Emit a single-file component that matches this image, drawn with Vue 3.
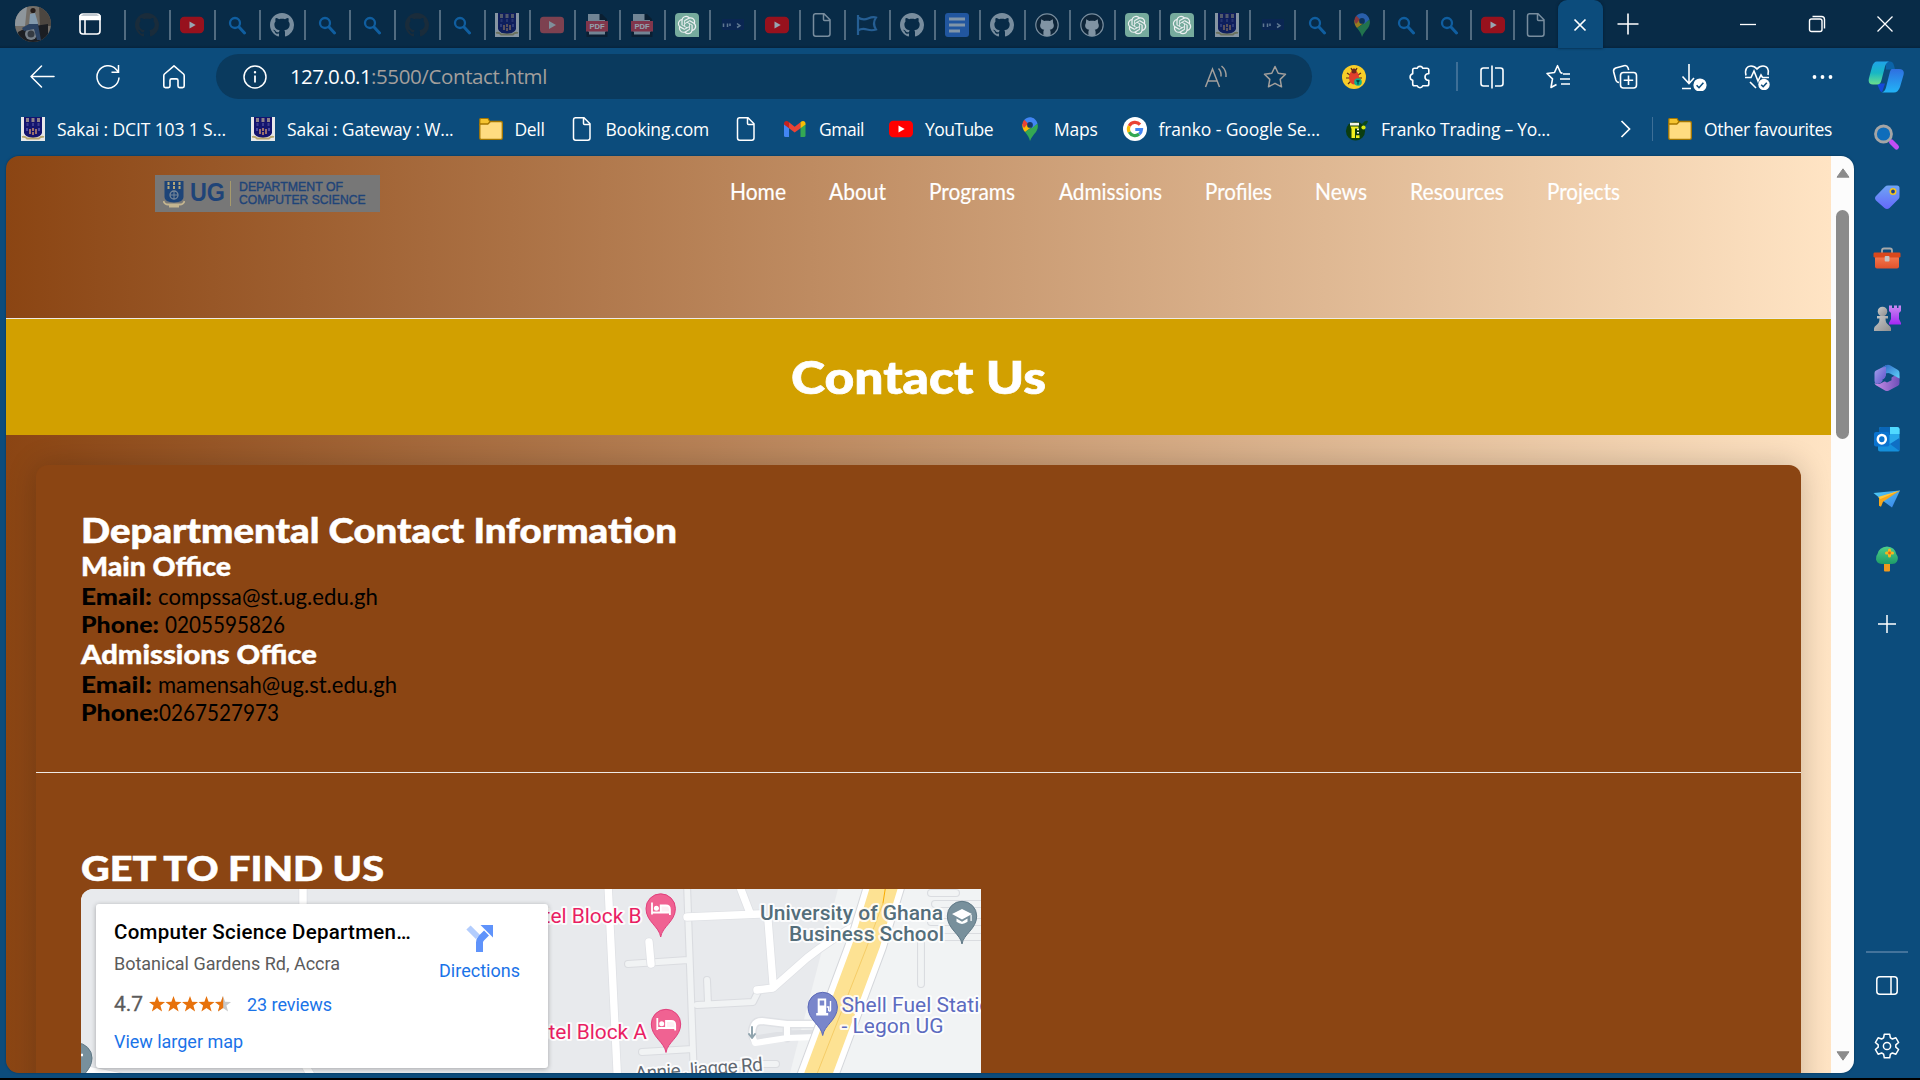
<script setup>
const tabs = [
  ['github', 'ghost'], ['youtube', 'dim'], ['search', 'dim'], ['github', 'mute'], ['search', 'dim'],
  ['search', 'dim'], ['github', 'ghost'], ['search', 'dim'], ['crest', 'mid'], ['youtube-pale', 'mid'],
  ['pdf', 'mid'], ['pdf', 'mid'], ['openai', 'high'], ['ims', 'dim'], ['youtube', 'dim'],
  ['doc', 'mute'], ['flag', 'mid'], ['github', 'mute'], ['gdocs', 'mid'], ['github', 'mute'],
  ['github-ring', 'mute'], ['github-ring', 'mute'], ['openai', 'high'], ['openai', 'high'],
  ['crest', 'mid'], ['ims', 'dim'], ['search', 'dim'],
]
const lateTabs = [['maps', 'dim'], ['search', 'dim'], ['search', 'dim'], ['youtube', 'dim'], ['doc', 'mute']]

const bookmarks = [
  { icon: 'crest', text: 'Sakai : DCIT 103 1 S...', w: 169 },
  { icon: 'crest', text: 'Sakai : Gateway : W...', w: 166.5 },
  { icon: 'folder', text: 'Dell', w: 30 },
  { icon: 'doc', text: 'Booking.com', w: 103.5 },
  { icon: 'doc' },
  { icon: 'gmail', text: 'Gmail', w: 45 },
  { icon: 'youtube', text: 'YouTube', w: 68 },
  { icon: 'maps', text: 'Maps', w: 43.5 },
  { icon: 'google', text: 'franko - Google Se...', w: 161.5 },
  { icon: 'franko', text: 'Franko Trading – Yo...', w: 169 },
]

const nav = [
  { text: 'Home', w: 56 }, { text: 'About', w: 57 }, { text: 'Programs', w: 86 },
  { text: 'Admissions', w: 103 }, { text: 'Profiles', w: 67 }, { text: 'News', w: 52 },
  { text: 'Resources', w: 94 }, { text: 'Projects', w: 73 },
]

const sideApps = ['magnifier', 'tag', 'toolbox', 'chess', 'm365', 'outlook', 'plane', 'tree']

// Tracks a label out (or in) so that it fills the given width.
const vFit = {
  mounted(el, { value }) {
    const natural = el.getBoundingClientRect().width
    el.style.letterSpacing = (value - natural) / el.textContent.length + 'px'
  },
}

// Widens or condenses the letterforms themselves to the given width.
const vStretch = {
  mounted(el, { value }) {
    const natural = el.getBoundingClientRect().width
    el.style.width = value + 'px'
    el.style.transform = `scaleX(${value / natural})`
  },
}
</script>

<template>
  <svg class="sprite" aria-hidden="true">
    <defs>
      <linearGradient id="cpA" x1="0" y1="0" x2="0" y2="1"><stop offset="0" stop-color="#1fa2e8" /><stop offset=".5" stop-color="#18b7c4" /><stop offset="1" stop-color="#6be08c" /></linearGradient>
      <linearGradient id="cpB" x1="0" y1="0" x2="0" y2="1"><stop offset="0" stop-color="#2f6fe0" /><stop offset="1" stop-color="#22b4f7" /></linearGradient>
      <linearGradient id="tagG" x1="0" y1="0" x2="0" y2="1"><stop offset="0" stop-color="#6fa4f4" /><stop offset="1" stop-color="#6468fb" /></linearGradient>
      <linearGradient id="boxG" x1="0" y1="0" x2="0" y2="1"><stop offset="0" stop-color="#f47a50" /><stop offset="1" stop-color="#e0522c" /></linearGradient>
      <linearGradient id="greyG" x1="0" y1="0" x2="1" y2="1"><stop offset="0" stop-color="#c9c9c9" /><stop offset="1" stop-color="#8f8f8f" /></linearGradient>
      <linearGradient id="rookG" x1="0" y1="0" x2="0" y2="1"><stop offset="0" stop-color="#c98bf0" /><stop offset="1" stop-color="#a426f5" /></linearGradient>
      <linearGradient id="mA" x1="0" y1="0" x2="1" y2="1"><stop offset="0" stop-color="#a7a4ee" /><stop offset="1" stop-color="#5b50c8" /></linearGradient>
      <linearGradient id="mB" x1="0" y1="0" x2="1" y2="1"><stop offset="0" stop-color="#2c62c4" /><stop offset="1" stop-color="#5fd4fa" /></linearGradient>
      <linearGradient id="mC" x1="0" y1="0" x2="1" y2="0"><stop offset="0" stop-color="#c98fe8" /><stop offset="1" stop-color="#6f4fb8" /></linearGradient>
      <linearGradient id="plG" x1="0" y1="0" x2="1" y2="1"><stop offset="0" stop-color="#4fd0f6" /><stop offset="1" stop-color="#3b7fe8" /></linearGradient>
      <linearGradient id="trG" x1="0" y1="0" x2="0" y2="1"><stop offset="0" stop-color="#4fd08a" /><stop offset="1" stop-color="#1e9c68" /></linearGradient>
    </defs>
    <symbol id="github" viewBox="0 0 16 16"><path fill="currentColor" d="M8 0C3.58 0 0 3.58 0 8c0 3.54 2.29 6.53 5.47 7.59.4.07.55-.17.55-.38 0-.19-.01-.82-.01-1.49-2.01.37-2.53-.49-2.69-.94-.09-.23-.48-.94-.82-1.13-.28-.15-.68-.52-.01-.53.63-.01 1.08.58 1.23.82.72 1.21 1.87.87 2.33.66.07-.52.28-.87.51-1.07-1.78-.2-3.64-.89-3.64-3.95 0-.87.31-1.59.82-2.15-.08-.2-.36-1.02.08-2.12 0 0 .67-.21 2.2.82.64-.18 1.32-.27 2-.27s1.36.09 2 .27c1.53-1.04 2.2-.82 2.2-.82.44 1.1.16 1.92.08 2.12.51.56.82 1.27.82 2.15 0 3.07-1.87 3.75-3.65 3.95.29.25.54.73.54 1.48 0 1.07-.01 1.93-.01 2.2 0 .21.15.46.55.38A8.01 8.01 0 0 0 16 8c0-4.42-3.58-8-8-8z" /></symbol>
    <symbol id="github-ring" viewBox="0 0 24 24"><circle cx="12" cy="12" r="11.2" fill="#14212e" stroke="#dfe7ee" stroke-width="1.2" /><path fill="#eef3f7" d="M6.2 6.2l3 1.8c1.8-.5 3.8-.5 5.6 0l3-1.8.3 3.8c1.8 3.2.2 6.5-3.4 6.7.8.8.9 1.6.9 2.6v3.2c-2.2.9-5 .9-7.2 0v-3.2c0-1 .1-1.8.9-2.6-3.6-.2-5.2-3.5-3.4-6.7z" /></symbol>
    <symbol id="youtube" viewBox="0 0 24 24"><rect y="3.7" width="24" height="16.6" rx="4.2" fill="#f00" /><path d="M9.5 8.4v7.2l6.2-3.6z" fill="#fff" /></symbol>
    <symbol id="youtube-pale" viewBox="0 0 24 24"><rect y="3.7" width="24" height="16.6" rx="3.5" fill="#d95357" /><path d="M9 8v8l7-4z" fill="#ddd" /></symbol>
    <symbol id="search" viewBox="0 0 24 24"><circle cx="10" cy="10" r="5" fill="none" stroke="#1684e0" stroke-width="2.3" /><path d="M14 14l5.5 6" stroke="#1684e0" stroke-width="3" stroke-linecap="round" /></symbol>
    <symbol id="crest" viewBox="0 0 24 24"><path fill="#e9e9e9" d="M0 0h24v24H0z" /><path fill="#14146e" d="M3 0h18v16q-1 4-9 5-8-1-9-5z" /><path fill="#8d8087" d="M5 1h3v4H5zM10.500 1h3v4h-3zM16 1h3v4h-3z" /><path fill="#3d3d8e" d="M5.500 6h2v3h-2zM11 6h2v3h-2zM16.500 6h2v3h-2z" /><path fill="#9a706e" d="M8 12h2v5H8zM14 12h2v5h-2zM11 11h2v3h-2zM11 15h2v3h-2z" /><path fill="#4a4aa0" d="M5 11h2v3H5zM17 11h2v3h-2z" /><path fill="none" stroke="#b7a66f" stroke-width="1.8" d="M1 20q3-1 5 1.500h12q2-2.500 5-1.500" /></symbol>
    <symbol id="pdf" viewBox="0 0 24 24"><path fill="#c3cbd2" d="M3 1h12l6 6v16H3z" /><path fill="#0c1722" d="M14.500 1H17l5 5v4h-2V7h-5.500zM1.500 18.500h21V24h-21z" /><path fill="#c3cbd2" d="M4 18h16v3.500H4z" /><rect x="1" y="8" width="22" height="10.500" fill="#e0404f" /><text x="12" y="15.900" font-family="Liberation Sans" font-weight="700" font-size="7.600" fill="#fff" text-anchor="middle">PDF</text></symbol>
    <symbol id="openai" viewBox="0 0 24 24"><path d="M4 0h16a4 4 0 0 1 4 4v20H4a4 4 0 0 1-4-4V4a4 4 0 0 1 4-4z" fill="#7fb5a4" /><path transform="translate(2.8 2.8) scale(.77)" fill="#fff" d="M22.2819 9.8211a5.9847 5.9847 0 0 0-.5157-4.9108 6.0462 6.0462 0 0 0-6.5098-2.9A6.0651 6.0651 0 0 0 4.9807 4.1818a5.9847 5.9847 0 0 0-3.9977 2.9 6.0462 6.0462 0 0 0 .7427 7.0966 5.98 5.98 0 0 0 .511 4.9107 6.051 6.051 0 0 0 6.5146 2.9001A5.9847 5.9847 0 0 0 13.2599 24a6.0557 6.0557 0 0 0 5.7718-4.2058 5.9894 5.9894 0 0 0 3.9977-2.9001 6.0557 6.0557 0 0 0-.7475-7.0729zm-9.022 12.6081a4.4755 4.4755 0 0 1-2.8764-1.0408l.1419-.0804 4.7783-2.7582a.7948.7948 0 0 0 .3927-.6813v-6.7369l2.02 1.1686a.071.071 0 0 1 .038.052v5.5826a4.504 4.504 0 0 1-4.4945 4.4944zm-9.6607-4.1254a4.4708 4.4708 0 0 1-.5346-3.0137l.142.0852 4.783 2.7582a.7712.7712 0 0 0 .7806 0l5.8428-3.3685v2.3324a.0804.0804 0 0 1-.0332.0615L9.74 19.9502a4.4992 4.4992 0 0 1-6.1408-1.6464zM2.3408 7.8956a4.485 4.485 0 0 1 2.3655-1.9728V11.6a.7664.7664 0 0 0 .3879.6765l5.8144 3.3543-2.0201 1.1685a.0757.0757 0 0 1-.071 0l-4.8303-2.7865A4.504 4.504 0 0 1 2.3408 7.872zm16.5963 3.8558L13.1038 8.364 15.1192 7.2a.0757.0757 0 0 1 .071 0l4.8303 2.7913a4.4944 4.4944 0 0 1-.6765 8.1042v-5.6772a.79.79 0 0 0-.407-.667zm2.0107-3.0231l-.142-.0852-4.7735-2.7818a.7759.7759 0 0 0-.7854 0L9.409 9.2297V6.8974a.0662.0662 0 0 1 .0284-.0615l4.8303-2.7866a4.4992 4.4992 0 0 1 6.6802 4.66zM8.3065 12.863l-2.02-1.1638a.0804.0804 0 0 1-.038-.0567V6.0742a4.4992 4.4992 0 0 1 7.3757-3.4537l-.142.0805L8.704 5.459a.7948.7948 0 0 0-.3927.6813zm1.0976-2.3654l2.602-1.4998 2.6069 1.4998v2.9994l-2.5974 1.4997-2.6067-1.4997Z" /></symbol>
    <symbol id="ims" viewBox="0 0 24 24"><path fill="#15157e" d="M2 6h22v11H2z" opacity=".35" /><path d="M3.500 10.500v3.500M7.500 10.500v3.500M10 10.500v2.500M17 10.500l3 2.200-3 1.800" stroke="#9fb0c6" stroke-width="1.500" fill="none" /></symbol>
    <symbol id="doc" viewBox="0 0 24 24"><path d="M5 .8h9l6 6V21a2.200 2.200 0 0 1-2.200 2.200H5.700A2.200 2.200 0 0 1 3.500 21V3A2.200 2.200 0 0 1 5.700.8M13.500.8v5.700q0 1 1 1h5.500" fill="none" stroke="currentColor" stroke-width="1.500" /></symbol>
    <symbol id="flag" viewBox="0 0 24 24"><path d="M3 22V2M3 4.500q5 3 10 1t8-1q-4 6 0 12-4 1.500-9 0t-9 1" fill="none" stroke="#3c86cf" stroke-width="2.200" /></symbol>
    <symbol id="gdocs" viewBox="0 0 24 24"><rect width="24" height="24" rx="3" fill="#3578e5" /><path d="M4 6h16M4 12h16M4 18h11" stroke="#dfe8f5" stroke-width="2.800" /></symbol>
    <symbol id="maps" viewBox="0 0 24 24"><path fill="#34a853" d="M12 24c-1-3.500-2-5.500-5-9L19.500 6.500c1 3.500 0 6-1.500 8.500-2.500 3-4.500 5-6 9z" /><path fill="#fbbc04" d="M7 15c-2-2.500-3-5-2.600-7.800L9 5l6 4z" /><path fill="#ea4335" d="M4.400 8c0-2.500.8-4 2-5.300l4.100 3.400-4.500 5z" /><path fill="#4285f4" d="M6.400 2.700C10-1.500 17.500-.5 19.500 6.500L14 11 9 5.500z" /><circle cx="12" cy="7.900" r="2.900" fill="#133a6b" /></symbol>
    <symbol id="folder" viewBox="0 0 24 24"><path d="M.8 2.500Q.8 1.500 2 1.500h7l2 3.500-2 3H.8z" fill="#f5c431" stroke="#a67700" stroke-width="1.200" /><path d="M.8 7h8l2.700-2.500H22q1.300 0 1.300 1.300V21q0 1.300-1.300 1.300H2.100Q.8 22.300.8 21z" fill="#ffdc80" stroke="#a67700" stroke-width="1.300" /></symbol>
    <symbol id="gmail" viewBox="0 0 24 24"><path fill="#4285f4" d="M1 6.500l5 4V20H2.500Q1 20 1 18.500z" /><path fill="#34a853" d="M22.500 6.500l-5 4V20H21q1.500 0 1.500-1.500z" /><path fill="#ea4335" d="M6 5.300L11.700 9.700l5.800-4.400v6l-5.800 4.300L6 11.300z" /><path fill="#c5221f" d="M1 6.800c0-3 3-3.500 5-1.500v6L1 7.500z" /><path fill="#fbbc04" d="M22.500 6.800c0-3-3-3.500-5-1.500v6l5-3.800z" /></symbol>
    <symbol id="google" viewBox="0 0 24 24"><circle cx="12" cy="12" r="12" fill="#fff" /><g fill="none" stroke-width="3.200"><path stroke="#ea4335" d="M17 7.600A6.600 6.600 0 0 0 6.200 8.900" /><path stroke="#fbbc04" d="M6.200 8.900a6.600 6.600 0 0 0 0 6.200" /><path stroke="#34a853" d="M6.200 15.100a6.600 6.600 0 0 0 10 2" /><path stroke="#4285f4" d="M16.200 17.100a6.600 6.600 0 0 0 2.300-4.600H12.300" /></g></symbol>
    <symbol id="franko" viewBox="0 0 24 24"><circle cx="10.500" cy="14" r="9.600" fill="#0b3d10" /><path d="M17 7q3-4 6-3-1 4-4 5z" fill="#0b4a1a" /><path fill="#f4f4e8" d="M5 5.800h9v2.700H5zM12 11.500h2v1.800h-2zM12 15h2v1.500h-2z" /><path fill="#f2ef1c" d="M5.500 9.500h8v2H10v9.500H6.500v-9zM11 18.300h3.500V21H11z" /><circle cx="18.500" cy="10.500" r="2.100" fill="#d8ea12" /></symbol>
    <symbol id="magnifier" viewBox="0 0 28 28"><path d="M18.500 19l5 5" stroke="#c24df5" stroke-width="5" stroke-linecap="round" /><circle cx="10.500" cy="11" r="8" fill="#0f6dbb" stroke="#a5a5a5" stroke-width="2.800" /></symbol>
    <symbol id="tag" viewBox="0 0 28 28"><path fill="url(#tagG)" d="M15 2.500h9q2.500 0 2.500 2.500v8.500q0 1.500-1 2.500l-9 9q-2.500 2-5 0L3 17.500q-2-2.300 0-4.500l9-9.200q1-1.300 3-1.300z" /><circle cx="20" cy="8.500" r="2.700" fill="#1a3f8f" stroke="#f3c51d" stroke-width="1.600" /></symbol>
    <symbol id="toolbox" viewBox="0 0 28 28"><path d="M9 9V6.500Q9 4.500 11 4.500h6q2 0 2 2V9" fill="none" stroke="#a9a9a9" stroke-width="1.800" /><rect x="2" y="12" width="24" height="12.500" rx="2" fill="url(#boxG)" /><rect x=".5" y="8.500" width="27" height="5" rx="1.200" fill="#d9481c" /><rect x="11.700" y="12" width="4.800" height="5.500" rx="1" fill="#c4c4c4" /></symbol>
    <symbol id="chess" viewBox="0 0 28 28"><path fill="url(#rookG)" d="M16 1.500h3V4h2V1.500h3V4h1.500V1.500H28V7l-2 2v6l2 4v1.500H16V19l2-4V9l-2-2z" /><circle cx="9.500" cy="7.500" r="4.800" fill="url(#greyG)" /><path fill="url(#greyG)" d="M4 12h11v2.500h-2.500q0 4.500 3 6.500 2.500 1.500 2.500 3.500V27H1v-2.500Q1 22.500 3.500 21q3-2 3-6.500H4z" /></symbol>
    <symbol id="m365" viewBox="0 0 28 28"><path fill="url(#mC)" d="M26.500 12v7q0 2-1.500 2.800L16 26.500q-2 1-4 0L3 21.300q-1.200-.7-1.500-2.300 3.500 2 6.500.3l6-3.300 7-4q4-2 5.500 0z" /><path fill="url(#mA)" d="M9 3.500l4-2.200v10q0 3-2.500 4.500L8 18.800q-3 2-5.500.5-1-.6-1-2.800V9q0-1.500 1.500-2.400z" /><path fill="url(#mB)" d="M9 3.500L13 1.200q2-1 4 0L25 6q1.500 1 1.500 2.700v5.800l-9-4.700q-2-1.200-4.500-.3V3z" /><path fill="#0c4c7c" d="M13.500 9.500l5 2.700v4L14 18.500l-5-2.500q4-1.500 4.500-6.500z" /></symbol>
    <symbol id="outlook" viewBox="0 0 28 28"><path fill="#28a8ea" d="M8 2h16q2.500 0 2.500 2.500v9L17 20 6 14V4q0-2 2-2z" /><path fill="#0a66b8" d="M8 2h9v8H6V4q0-2 2-2z" /><path fill="#50d9ff" d="M17 2h7q2.500 0 2.500 2.500V9H17z" /><path fill="#1590dc" d="M5 14l12 5 9.500-6v12q0 1.500-1.500 1.500H7q-2 0-2-2z" /><path fill="#0f6fc4" d="M17 19l9.500 7V13z" /><rect x="1" y="7" width="15.500" height="14.500" rx="2" fill="#0a73cf" /><ellipse cx="8.800" cy="14.200" rx="4" ry="4.200" fill="none" stroke="#fff" stroke-width="2.500" /></symbol>
    <symbol id="plane" viewBox="0 0 28 28"><path fill="url(#plG)" d="M.5 8L27 5.500 19 22.500 11.500 17z" /><path fill="#f7a71b" d="M27 5.500L6 12.500v8.300l2 1 2-5z" /><path fill="#ffc83a" d="M27 5.500L5 12l2.500 2z" /></symbol>
    <symbol id="tree" viewBox="0 0 28 28"><rect x="11" y="18" width="6" height="8.500" rx="1" fill="#f0991d" /><path fill="url(#trG)" d="M14 1.500q8 .5 9.500 8 2.500 3 .5 7-1.500 2.500-5 2.500H8.500q-4.500-.5-5.500-4.500-.5-3.500 1.500-5.500Q6 2 14 1.500z" /><path d="M13.500 8h6M16.500 5v6" stroke="#f8b51e" stroke-width="3" stroke-linecap="round" /><circle cx="16.500" cy="8" r="1.400" fill="#e0641b" /></symbol>
    <symbol id="bedPin" viewBox="-16 -16 32 46"><path d="M0 28.500C-1.500 18-14.700 13-14.700 0a14.700 14.700 0 0 1 29.400 0C14.700 13 1.500 18 0 28.500z" fill="#f06292" stroke="#e0407c" stroke-width="1" /><path d="M-8.700-6v12M-8.700 4H9.200V6.500 1q0-4-4-4H0v6.500" stroke="#fff" stroke-width="1.800" fill="none" /><path fill="#fff" d="M0-2.800h5.500Q9-2.500 9 1.500v2H0z" opacity=".9" /><circle cx="-4.300" cy="-.2" r="2.500" fill="#fff" /></symbol>
  </svg>

  <div class="window">
    <header class="tabstrip">
      <div class="avatar">
        <svg viewBox="0 0 36 36"><rect width="36" height="36" fill="#746f69" /><path fill="#8e969c" d="M0 0h12l-2 20H0z" /><path fill="#4c4640" d="M24 0h12v20H25z" /><path fill="#1b1e23" d="M3 26l10-5 20-3v18H4z" /><circle cx="16" cy="28" r="6" fill="#767f88" /><circle cx="16" cy="28" r="3.500" fill="#343a42" /><circle cx="18" cy="4.500" r="2.600" fill="#241c1a" /><path fill="#8299ad" d="M15 8l5-1 3 10-1 3-8-1z" /><path fill="#2b4262" d="M14 18l9 0 3 16h-4l-3-11-10 2-2-3z" /></svg>
      </div>
      <svg class="workspace" viewBox="0 0 22 22" fill="none" stroke="#fff" stroke-width="1.600"><rect x="1" y="1" width="20" height="20" rx="3" /><path d="M1 3h20v3.500H1z" fill="#fff" /><path d="M6 7v14" /></svg>
      <div class="tabs">
        <span v-for="(t, i) in tabs" :key="i" class="tab"><svg class="ico24" :class="t[1]"><use :href="'#' + t[0]" /></svg></span>
        <span v-for="(t, i) in lateTabs" :key="'l' + i" class="tab late"><svg class="ico24" :class="t[1]"><use :href="'#' + t[0]" /></svg></span>
      </div>
      <div class="active-tab"><svg viewBox="0 0 14 14"><path d="M1.500 1.500l11 11M12.500 1.500l-11 11" stroke="#fff" stroke-width="1.700" /></svg></div>
      <svg class="new-tab" viewBox="0 0 22 22"><path d="M11 0.500v21M.5 11h21" stroke="#fff" stroke-width="1.600" /></svg>
      <div class="controls">
        <svg viewBox="0 0 18 18"><path d="M1 9.500h16" stroke="#fff" stroke-width="1.300" /></svg>
        <svg viewBox="0 0 18 18" fill="none" stroke="#fff" stroke-width="1.400"><rect x="1.500" y="4" width="12.500" height="12.500" rx="2" /><path d="M4.500 1.500h9q3 0 3 3v9" /></svg>
        <svg viewBox="0 0 18 18"><path d="M1.500 1.500l15 15M16.500 1.500l-15 15" stroke="#fff" stroke-width="1.300" /></svg>
      </div>
    </header>

    <div class="toolbar">
      <span class="cell"><svg class="ico26" viewBox="0 0 26 26" fill="none" stroke="#fff" stroke-width="1.500"><path d="M25 12.500H2M12.500 2L2 12.500 12.500 23" stroke-linecap="round" stroke-linejoin="round" /></svg></span>
      <span class="cell"><svg class="ico26" viewBox="0 0 26 26" fill="none" stroke="#fff" stroke-width="1.500"><path d="M24 13.500a11 11.200 0 1 1-3-8.300L23.500 8M23.500 1v7.200h-7" /></svg></span>
      <span class="cell"><svg class="ico26" viewBox="0 0 26 26" fill="none" stroke="#fff" stroke-width="1.600"><path d="M13 1.800L22.500 10q.7.700.7 1.700V22q0 1.600-1.600 1.600h-3q-1.600 0-1.600-1.600v-5.500q0-1.600-1.600-1.600h-4.800q-1.600 0-1.600 1.600V22q0 1.600-1.600 1.600h-3Q2.800 23.600 2.800 22V11.700q0-1 .7-1.700z" stroke-linejoin="round" /></svg></span>
      <div class="address">
        <svg class="ico24 info" viewBox="0 0 24 24" fill="none" stroke="#fff" stroke-width="1.500"><circle cx="12" cy="12" r="11" /><path d="M12 10.500V17.500" stroke-width="1.800" /><circle cx="12" cy="7.200" r="1.200" fill="#fff" stroke="none" /></svg>
        <span v-fit="81" class="host">127.0.0.1</span><span v-fit="176" class="rest">:5500/Contact.html</span>
        <span class="spacer"></span>
        <svg class="ico24 aloud" viewBox="0 0 24 24" fill="none" stroke="#a39f9c" stroke-width="1.500"><path d="M1.500 22L8.500 4l7 18M4 16h9M14.500 3.500q3 3 2.500 8M17.500 1q5 4 4.500 11" /></svg>
        <svg class="ico24 star" viewBox="0 0 24 24" fill="none" stroke="#a39f9c" stroke-width="1.500"><path d="M12 1.500l3.200 6.700 7.300 1-5.300 5.200 1.300 7.400-6.500-3.500-6.500 3.500 1.300-7.400L1.500 9.200l7.300-1z" stroke-linejoin="round" /></svg>
      </div>
      <span class="cell first"><svg class="ico24" viewBox="0 0 24 24"><circle cx="12" cy="12" r="12" fill="#f8cd28" /><path d="M5 8l3 2M19 8l-3 2M4 13h4M20 13h-4M6 19l3-3M10 5L9 3M14 5l1-2" stroke="#5e2a1a" stroke-width="1.200" /><ellipse cx="12" cy="12.500" rx="5" ry="7" fill="#e0402c" /><circle cx="12" cy="6" r="2.500" fill="#6d2a1c" /><circle cx="16" cy="17" r="3.800" fill="#0fae8d" /><path d="M14.500 15.500l1.500 1.500 1.500-1.500M16 17v2.500" stroke="#044" stroke-width="1.200" /></svg></span>
      <span class="cell"><svg class="ico24" viewBox="0 0 24 24" fill="none" stroke="#fff" stroke-width="1.600" stroke-linejoin="round"><path d="M9.200 3.300a3 3 0 0 1 5.600 0H19q1.800 0 1.800 1.800v3.700h-1.300a3.300 3.300 0 0 0 0 6.400h1.300V19q0 1.800-1.800 1.800h-4.200a3 3 0 0 1-5.600 0H6.500Q4.700 20.800 4.700 19v-3.700a3.400 3.400 0 0 1 0-6.600V5.100q0-1.800 1.800-1.800z" /></svg></span>
      <span class="divider"></span>
      <span class="cell"><svg class="ico24" viewBox="0 0 24 24" fill="none" stroke="#fff" stroke-width="1.600"><path d="M9 3H3.500Q1 3 1 5.500v13Q1 21 3.500 21H9M15 3h5.500Q23 3 23 5.500v13q0 2.500-2.500 2.500H15M12 .5v23" /></svg></span>
      <span class="cell"><svg class="ico26" viewBox="0 0 26 26" fill="none" stroke="#fff" stroke-width="1.600" stroke-linejoin="round"><path d="M17.500 9.500L15.500 8.500 12.500 1.700 9.500 8.500 2 9.500l5.500 5.300L6 23.500l5.500-3M18 10h7M15 15h10M16 20h9" /></svg></span>
      <span class="cell nudge1"><svg class="ico26" viewBox="0 0 26 26" fill="none" stroke="#fff" stroke-width="1.600"><rect x="8.500" y="8.500" width="16" height="15.500" rx="3" /><path d="M16.500 11.500v9.500M11.700 16.200h9.500M7 18.500q-2.500-.2-3.200-2.600L1.700 8q-.7-3 2-4L12 1.700q3-.7 4 2l.7 2.300" /></svg></span>
      <span class="cell nudge3"><svg class="ico28" viewBox="0 0 28 28" fill="none" stroke="#fff" stroke-width="1.600"><path d="M9 1v19M2.500 13.500L9 20.500l5-5.500M2 25.500h9" /><circle cx="20" cy="22" r="6.600" fill="#fff" stroke="none" /><path d="M16.600 22.300l2.400 2.400 4.400-4.900" stroke="#0c4c7c" /></svg></span>
      <span class="cell nudge1"><svg class="ico26" viewBox="0 0 26 26" fill="none" stroke="#fff" stroke-width="1.600"><path d="M2 11.500C.5 5 3 2 7 2q3.500 0 6 3 2.500-3 6-3c4 0 6.500 3.500 5 9M1 13.500h6l3-6.500 4 10 3-6 1.500 2.500H25M6 18l6 6" /><circle cx="20" cy="20.500" r="5.700" fill="#fff" stroke="none" /><path d="M17.200 20.700l2 2 3.600-4" stroke="#0c4c7c" /></svg></span>
      <span class="cell"><svg class="ico24" viewBox="0 0 24 24" fill="#fff"><circle cx="4.500" cy="12" r="1.900" /><circle cx="12.500" cy="12" r="1.900" /><circle cx="20.500" cy="12" r="1.900" /></svg></span>
      <span class="cell copilot"><svg viewBox="0 0 36 32"><path fill="#0b63a8" d="M18 .5h4q3 0 4 4l1 4h-9z" /><path fill="#1549d8" d="M9 22.500h8l-3 9q-2-1-3-4z" /><path fill="url(#cpB)" d="M24 8h7q6 0 4.500 6l-3.500 12q-2 5.500-6 5.500H14q3-1 4-5l3.500-14Q22.500 8 24 8z" /><path fill="url(#cpA)" d="M9 .5h12q-3 1-4 5L13.500 19q-1 4.500-4.500 4.500H5Q-.500 23.500 1 17L4 6Q5.500.5 9 .5z" /></svg></span>
    </div>

    <div class="body">
      <div class="left">
        <div class="bookmarks">
          <span v-for="(b, i) in bookmarks" :key="i" class="bookmark">
            <svg class="ico24"><use :href="'#' + b.icon" /></svg>
            <span v-if="b.text" v-fit="b.w" class="bm-text">{{ b.text }}</span>
          </span>
          <svg class="chevron" viewBox="0 0 11 18"><path d="M1.500 1l8 8-8 8" fill="none" stroke="#fff" stroke-width="1.700" /></svg>
          <span class="bm-divider"></span>
          <span class="bookmark"><svg class="ico24"><use href="#folder" /></svg><span v-fit="128" class="bm-text">Other favourites</span></span>
        </div>

        <div class="viewport">
          <main class="page">
            <div class="site-head">
              <div class="logo">
                <svg class="logo-crest" viewBox="0 0 22 28"><path fill="#1d4478" d="M1.500 1h19v16q0 5-9.500 5.500Q1.500 22 1.500 17z" /><path stroke="#b3a678" stroke-width="2" stroke-dasharray="3 1" d="M5.500 2v7M11 2v7M16.500 2v7" /><circle cx="11" cy="15" r="4" fill="none" stroke="#77879a" stroke-width="1.300" /><path d="M7 15h8M11 11v8" stroke="#77879a" /><path fill="none" stroke="#c4b590" stroke-width="1.800" d="M.5 21q1 3.500 4.500 3.500h12q3.500 0 4.500-3.500M6 26.500h10" /></svg>
                <span v-stretch="35" class="ug">UG</span>
                <span class="logo-rule"></span>
                <span class="dept"><span v-stretch="104">DEPARTMENT OF</span><span v-stretch="126.500">COMPUTER SCIENCE</span></span>
              </div>
              <nav><a v-for="n in nav" :key="n.text" v-stretch="n.w">{{ n.text }}</a></nav>
            </div>
            <div class="banner"><h1 v-stretch="255">Contact Us</h1></div>
            <div class="card">
              <section class="contact">
                <h2><span v-stretch="596">Departmental Contact Information</span></h2>
                <h3><span v-stretch="150">Main Office</span></h3>
                <p><b v-stretch="71">Email:</b><span v-stretch="220" class="sp">compssa@st.ug.edu.gh</span></p>
                <p><b v-stretch="78">Phone:</b><span v-stretch="120" class="sp">0205595826</span></p>
                <h3><span v-stretch="236">Admissions Office</span></h3>
                <p><b v-stretch="71">Email:</b><span v-stretch="239" class="sp">mamensah@ug.st.edu.gh</span></p>
                <p><b v-stretch="78">Phone:</b><span v-stretch="120">0267527973</span></p>
              </section>
              <section class="find">
                <h2><span v-stretch="303">GET TO FIND US</span></h2>
                <div class="map">
                  <svg class="map-canvas" viewBox="0 0 900 184" width="900" height="184">
                    <rect width="900" height="184" fill="#e8eaed" />
                    <path d="M757 0L709 184H900V0z" fill="#f1f3f4" />
                    <g fill="none" stroke-linecap="round" stroke-linejoin="round">
                      <path stroke="#dadce0" stroke-width="8" d="M606-5L613 190M616 116l56-3 5-10M626 91l1 23M547 75l60-4M561 163l51-3M656 175h39M840 54v41M850 4h25M854 15h46M850 33h50M850 48h50" />
                      <path stroke="#f1f3f4" stroke-width="5.800" d="M606-5L613 190M616 116l56-3 5-10M626 91l1 23M547 75l60-4M561 163l51-3M656 175h39M840 54v41M850 4h25M854 15h46M850 33h50M850 48h50" />
                      <path stroke="#dfe1e5" stroke-width="9" d="M527-5L536.500 190M222-5V20M225 178l6 10M606 28l73-3M659-2l10 26M687 31l5 63M676 101l16-2 34-30Q750 50 779 34M568 53l2 22M0 180l40 8M736 135l-30 0-25-3q-6 0-8 4-4 8 1 15l32-5 29-1M706 135v14" />
                      <path stroke="#fff" stroke-width="7.400" d="M527-5L536.500 190M222-5V20M225 178l6 10M606 28l73-3M659-2l10 26M687 31l5 63M676 101l16-2 34-30Q750 50 779 34M568 53l2 22M0 180l40 8" />
                      <path stroke="#fff" stroke-width="6" d="M736 135l-30 0-25-3q-6 0-8 4-4 8 1 18l32-5 29-1M706 135v14" />
                      <path stroke="#d5d7db" stroke-width="41" d="M807-15L786 54 728 210" />
                      <path stroke="#fff" stroke-width="39" d="M807-15L786 54 728 210" />
                      <path stroke="#fde293" stroke-width="27" d="M807-15L786 54 728 210" />
                      <path stroke="#f9ab00" stroke-width="1" d="M805-5L802 14" />
                      <path stroke="#f3c75c" stroke-width=".8" d="M802 14L785 60 734 190" />
                      <path stroke="#90a4ae" stroke-width="2" d="M671 138v10M668 145l3 4 3-4" />
                    </g>
                    <path d="M-4 198C-6 187-19 182-19 169a15 15 0 0 1 30 0C11 182-2 187-4 198z" fill="#78909c" stroke="#5f7886" /><path d="M-2 166h4" stroke="#fff" stroke-width="2.500" />
                    <g class="poi">
                      <text x="560.500" y="34" text-anchor="end" class="pink">Hostel Block B</text>
                      <text x="566" y="150" text-anchor="end" class="pink">Hostel Block A</text>
                      <text x="679" y="31" class="slate" textLength="183">University of Ghana</text>
                      <text x="708" y="52" class="slate" textLength="155">Business School</text>
                      <text x="760.500" y="122.500" class="indigo">Shell Fuel Station</text>
                      <text x="760.500" y="143.500" class="indigo" textLength="102">- Legon UG</text>
                      <text x="0" y="0" class="road" transform="translate(554.500 191) rotate(-4.200)" textLength="128">Annie Jiagge Rd</text>
                    </g>
                    <use href="#bedPin" x="563.700" y="3.500" width="32" height="46" />
                    <use href="#bedPin" x="569" y="119" width="32" height="46" />
                    <g transform="translate(881 27)"><path d="M0 28C-1.500 18-14.700 13-14.700 0a14.700 14.700 0 0 1 29.400 0C14.700 13 1.500 18 0 28z" fill="#78909c" stroke="#5f7886" /><path fill="#fff" d="M0-7L10-2 0 3.500-10-2zM-5.500 2.500L0 5.700l5.500-3.200v3.300Q0 10-5.500 5.800zM8.500-1h1.200v6H8.500z" /></g>
                    <g transform="translate(741.700 118)"><path d="M0 28.500C-1.500 18-14.700 13-14.700 0a14.700 14.700 0 0 1 29.400 0C14.700 13 1.500 18 0 28.500z" fill="#7986cb" stroke="#5b69b8" /><path fill="#fff" fill-rule="evenodd" d="M-5-8.500H3.500V6H5.500V8.500H-6.500V6H-5zM-3-6.500V-1.500H1.500v-5z" /><path d="M4 0h2v3.500q1.500 1.500 1.800-.5V-6" fill="none" stroke="#fff" stroke-width="1.400" /></g>
                  </svg>
                  <div class="place">
                    <div class="place-info">
                      <div v-fit="297" class="place-name">Computer Science Departmen…</div>
                      <div v-fit="226" class="place-addr">Botanical Gardens Rd, Accra</div>
                      <div class="rating">
                        <span v-fit="29" class="score">4.7</span>
                        <svg class="stars" viewBox="0 0 83 16"><defs><path id="st" d="M8 0l2.100 5.700 6 .2-4.700 3.700 1.700 5.900L8 12.100l-5.100 3.400 1.700-5.900L0 5.900l5.900-.2z" /><clipPath id="half"><path d="M0 0h8.200v16H0z" /></clipPath></defs><g fill="#e7710b"><use href="#st" /><use href="#st" x="16.500" /><use href="#st" x="33" /><use href="#st" x="49.500" /></g><use href="#st" x="66" fill="#c8c8c8" /><g transform="translate(66 0)"><use href="#st" fill="#e7710b" clip-path="url(#half)" /></g></svg>
                        <a v-fit="85" class="reviews">23 reviews</a>
                      </div>
                      <a v-fit="129" class="larger">View larger map</a>
                    </div>
                    <div class="directions">
                      <svg viewBox="0 0 27 27"><path d="M2.500 2.500l9.500 9.500" stroke="#b3cdfd" stroke-width="6" /><path d="M13.500 27V17.500q0-2.500 2-4.500l5-5" fill="none" stroke="#5f93fb" stroke-width="7" /><path d="M14.500 0H27v12.500z" fill="#5f93fb" /></svg>
                      <a v-fit="81">Directions</a>
                    </div>
                  </div>
                </div>
              </section>
            </div>
          </main>
          <div class="scrollbar">
            <svg viewBox="0 0 14 10"><path d="M7 .8L13 9.200H1z" fill="#8b8b8b" stroke="#8b8b8b" stroke-linejoin="round" /></svg>
            <span class="thumb"></span>
            <svg class="down" viewBox="0 0 14 10"><path d="M7 9.200L13 .8H1z" fill="#8b8b8b" stroke="#8b8b8b" stroke-linejoin="round" /></svg>
          </div>
        </div>
      </div>

      <aside class="sidebar">
        <span v-for="s in sideApps" :key="s" class="side-cell"><svg class="ico28"><use :href="'#' + s" /></svg></span>
        <span class="side-cell plus"><svg class="ico18" viewBox="0 0 18 18"><path d="M9 0v18M0 9h18" stroke="#fff" stroke-width="1.500" /></svg></span>
        <span class="spacer"></span>
        <span class="side-rule"></span>
        <svg class="panel-ico" viewBox="0 0 22 19" fill="none" stroke="#fff" stroke-width="1.500"><rect x=".8" y=".8" width="20.400" height="17.400" rx="3" /><path d="M15 1v17" /></svg>
        <svg class="gear" viewBox="0 0 26 26" fill="none" stroke="#fff" stroke-width="1.500" stroke-linejoin="round"><path d="M10.300 1.200h5.400l.7 3.600 2 1.200 3.500-1.200 2.700 4.700-2.800 2.300v2.400l2.800 2.300-2.700 4.700-3.500-1.200-2 1.200-.7 3.600h-5.400l-.7-3.600-2-1.200-3.500 1.200-2.700-4.700 2.800-2.300v-2.400L1.400 9.500l2.700-4.700L7.600 6l2-1.200z" /><circle cx="13" cy="13" r="3.600" /></svg>
      </aside>
    </div>
  </div>
</template>

<style>
body { margin: 0; background: #000; overflow: hidden; }
</style>

<style scoped>
* { box-sizing: border-box; }
.sprite { position: absolute; width: 0; height: 0; }
svg { display: block; flex: none; }
.ico24 { width: 24px; height: 24px; }
.ico26 { width: 26px; height: 26px; }
.ico28 { width: 28px; height: 28px; }
.ico18 { width: 18px; height: 18px; }
.spacer { flex: 1; }

.window { width: 1920px; height: 1078px; display: flex; flex-direction: column; background: #0c4c7c; color: #fff; font-family: 'Open Sans', 'Noto Sans', sans-serif; overflow: hidden; }

.tabstrip { height: 48px; flex: none; display: flex; align-items: center; background: linear-gradient(#082b47 45px, #06243d 48px); }
.avatar { width: 36px; height: 36px; margin-left: 15px; border-radius: 50%; overflow: hidden; }
.avatar svg { width: 36px; height: 36px; }
.workspace { width: 22px; height: 22px; margin-left: 28px; }
.tabs { display: flex; margin-left: 23px; height: 30px; margin-top: 2px; }
.tab { width: 45px; border-left: 2px solid #516b80; display: flex; align-items: center; padding-left: 9px; }
.tab.late { width: 43.5px; }
.ghost { color: #1a2c3b; }
.mute { color: #dfe7ee; opacity: .52; }
.dim { opacity: .58; }
.mid { opacity: .56; }
.high { opacity: .93; }
.active-tab { width: 45px; height: 48px; margin-left: 1px; background: #0c4c7c; border-radius: 9px 9px 0 0; display: flex; align-items: center; justify-content: center; padding-top: 2px; box-shadow: 0 0 3px #051d33; }
.active-tab svg { width: 14px; height: 14px; }
.new-tab { width: 22px; height: 22px; margin-left: 14px; }
.controls { display: flex; margin-left: auto; margin-right: 26px; gap: 50.5px; }
.controls svg { width: 18px; height: 18px; }

.toolbar { height: 57px; flex: none; display: flex; align-items: center; padding-left: 9px; }
.cell { width: 66px; flex: none; display: flex; justify-content: center; }
.cell.first { margin-left: 9px; }
.cell.copilot { width: 62px; }
.cell.nudge1 { padding-left: 2px; }
.cell.nudge3 { padding-left: 7px; }
.copilot svg { width: 36px; height: 32px; }
.divider { width: 5px; height: 29px; border-right: 2px solid #3e6f97; margin-right: 1px; }
.address { width: 1096px; height: 45px; margin-left: 9px; border-radius: 23px; background: #0a3a5e; display: flex; align-items: center; font-size: 20.5px; white-space: pre; }
.host, .rest { padding-bottom: 2px; }
.info { margin: 0 23px 0 27px; }
.rest { color: #a39f9c; }
.aloud { margin-right: 35px; }
.star { margin-right: 25px; }

.body { flex: 1; min-height: 0; display: flex; }
.left { width: 1854px; display: flex; flex-direction: column; }
.bookmarks { height: 51px; flex: none; display: flex; align-items: center; padding: 0 0 3px 21px; font-size: 17.5px; }
.bookmark { display: flex; align-items: center; gap: 12px; margin-right: 25px; white-space: pre; }
.bm-text { padding-bottom: 1px; }
.chevron { width: 11px; height: 18px; margin-left: auto; margin-right: 21px; }
.bm-divider { width: 1px; height: 24px; background: #3e6f97; margin-right: 15px; }
.bookmark:last-child { margin-right: 22px; }

.viewport { height: 917px; margin-left: 6px; display: flex; border-radius: 13px; overflow: hidden; box-shadow: 0 0 2px #06304f; }
.page { width: 1825px; height: 917px; overflow: hidden; background: linear-gradient(90deg, #8b4513, #ffe4c4); font-family: 'Lato', 'Gill Sans', sans-serif; }
.page h1, .page h2 span, .page h3 span, .page p span, .page p b, nav a, .ug, .dept span { display: inline-block; transform-origin: 0 50%; }
.site-head { height: 163px; border-bottom: 1px solid #eee9e4; display: flex; align-items: flex-start; padding: 19px 0 0 149px; }
.logo { width: 225px; height: 37px; background: #777; color: #1f4478; display: flex; align-items: center; padding-left: 8px; font-family: 'Liberation Sans', Arial, sans-serif; font-weight: 700; white-space: pre; }
.logo-crest { width: 22px; height: 28px; margin-right: 5px; }
.ug { font-size: 25px; margin-top: -3px; }
.logo-rule { width: 1px; height: 25px; background: #a79a6c; margin: -1px 8px 0 5px; }
.dept { display: flex; flex-direction: column; align-items: flex-start; font-size: 13px; line-height: 13.5px; font-weight: 400; margin-top: -1px; -webkit-text-stroke: .4px #1f4478; }
nav { display: flex; gap: 43.2px; margin-left: 350px; padding-top: 3px; font-size: 22.5px; line-height: 28px; white-space: pre; -webkit-text-stroke: .2px #fff; }

.banner { height: 116px; background: #d2a000; display: flex; align-items: center; justify-content: center; }
h1, h2, h3, p { margin: 0; white-space: pre; }
h1 { font-size: 45px; line-height: 56px; font-weight: 900; -webkit-text-stroke: .7px #fff; }
.card { margin: 30px 30px 0; background: #8b4513; border-radius: 12px; box-shadow: 0 0 30px rgba(0, 0, 0, .2); height: 700px; }
.contact { height: 308px; border-bottom: 1px solid #eee9e4; padding: 45px 45px 0; }
h2 { font-size: 34px; line-height: 40px; font-weight: 900; -webkit-text-stroke: .5px #fff; }
h3 { font-size: 26px; line-height: 32px; font-weight: 900; -webkit-text-stroke: .4px #fff; }
h3 span { padding-top: 1px; line-height: 31px; }
p { font-size: 23px; line-height: 28px; color: #000; }
p b { font-weight: 900; }
.sp { margin-left: 6px; }
.find { padding: 75px 45px 0; }
.find h2 { height: 41px; line-height: 39px; }

.map { position: relative; width: 900px; height: 300px; border-radius: 12px 0 0 0; overflow: hidden; font-family: 'Roboto', sans-serif; background: #e8eaed; }
.poi text { font-size: 21px; paint-order: stroke; stroke: #fff; stroke-opacity: .85; stroke-width: 4px; stroke-linejoin: round; }
.poi .pink { fill: #e91e63; font-size: 20.9px; }
.slate { fill: #546e7a; font-weight: 500; }
.indigo { fill: #5c6bc0; }
.poi .road { fill: #5f6770; font-size: 19px; }
.place { position: absolute; left: 15px; top: 15px; width: 452px; height: 164px; background: #fff; border-radius: 3px; box-shadow: 0 1px 5px rgba(0, 0, 0, .3); display: flex; padding: 0 28px 0 18px; justify-content: space-between; white-space: pre; }
.place-info { display: flex; flex-direction: column; align-items: flex-start; padding-top: 15px; color: #5b5b5b; }
.place-name { font-size: 20.5px; line-height: 26px; font-weight: 500; color: #000; }
.place-addr { font-size: 18px; line-height: 24px; margin-top: 7px; }
.rating { display: flex; align-items: center; height: 26px; margin-top: 15px; font-size: 18px; }
.score { font-size: 21px; -webkit-text-stroke: .3px #5b5b5b; }
.stars { width: 83px; height: 16px; margin: 0 15px 0 6px; }
.place a { color: #1a73e8; font-size: 18px; line-height: 22px; }
.reviews { padding-top: 2px; }
.larger { margin-top: 14px; }
.directions { padding-top: 21px; display: flex; flex-direction: column; align-items: center; }
.directions svg { width: 27px; height: 27px; margin-bottom: 8px; }

.scrollbar { width: 23px; background: #fcfcfc; display: flex; flex-direction: column; align-items: center; padding: 12px 0; }
.scrollbar svg { width: 14px; height: 10px; }
.thumb { width: 13px; height: 229px; border-radius: 7px; background: #8b8b8b; margin-top: 32px; }
.down { margin-top: auto; }

.sidebar { width: 66px; display: flex; flex-direction: column; align-items: center; padding-top: 2px; }
.side-cell { height: 60.3px; display: flex; align-items: center; }
.plus { padding-top: 8px; }
.side-rule { width: 42px; height: 2px; background: #44739b; }
.panel-ico { width: 22px; height: 19px; margin-top: 23px; }
.gear { width: 26px; height: 26px; margin: 38px 0 19px; }
</style>
